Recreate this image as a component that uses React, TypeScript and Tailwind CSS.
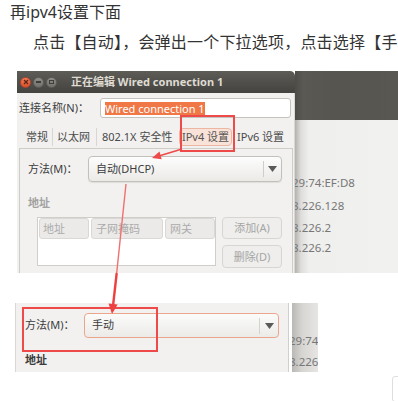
export default function App() {
  return (
    <div className="relative w-[398px] h-[401px] overflow-hidden bg-white font-['Noto_Sans','Noto_Sans_CJK_SC',sans-serif]">
      <div className="pl-[10px] h-[24px] leading-[24px] text-[16px] text-[#333] whitespace-nowrap">再ipv4设置下面</div>
      <div className="mt-[6px] pl-[33px] h-[24px] leading-[24px] text-[16px] text-[#333] whitespace-nowrap tracking-[0.2px]">点击【自动】，会弹出一个下拉选项，点击选择【手</div>

      {/* screenshot 1 */}
      <div className="mt-[17px] ml-[17px] flex h-[202px] overflow-hidden">
        <div className="w-[278px] flex flex-col">
          <div className="h-[22px] rounded-tr-[5px] bg-gradient-to-b from-[#5d5c57] to-[#44433f] flex items-center pl-[3px]">
            <div className="w-[11px] h-[11px] rounded-full bg-gradient-to-b from-[#f27b55] to-[#d9502c] border border-[#b4452a] flex items-center justify-center">
              <svg width="6" height="6" viewBox="0 0 6 6"><path d="M1 1L5 5M5 1L1 5" stroke="#5a2414" strokeWidth="1.2" /></svg>
            </div>
            <div className="ml-[2px] w-[11px] h-[11px] rounded-full bg-gradient-to-b from-[#8f8e89] to-[#72716c] border border-[#5f5e5a] flex items-center justify-center">
              <div className="w-[5px] h-[1.5px] bg-[#3e3d39]" />
            </div>
            <div className="ml-[2px] w-[11px] h-[11px] rounded-full bg-gradient-to-b from-[#8f8e89] to-[#72716c] border border-[#5f5e5a] flex items-center justify-center">
              <div className="w-[5px] h-[4px] border border-[#3e3d39]" />
            </div>
            <div className="ml-[14px] text-[11px] font-bold text-[#dfdbd2] whitespace-nowrap">正在编辑 Wired connection 1</div>
          </div>
          <div className="flex-1 bg-[#f2f1f0] pl-[2px] overflow-hidden border-r border-[#d9d7d3]">
            <div className="mt-[5px] flex items-center h-[20px]">
              <div className="w-[81px] text-[11px] text-[#3c3c3c] whitespace-nowrap">连接名称(N)：</div>
              <div className="w-[191px] h-[20px] bg-white border border-[#c4c2bd] rounded-[3px] flex items-center pl-[4px]">
                <span className="bg-[#f07746] text-white text-[11px] leading-[13px] whitespace-nowrap">Wired connection 1</span>
              </div>
            </div>
            <div className="mt-[8px] h-[22px] flex items-center text-[11px] text-[#4a4a4a] whitespace-nowrap">
              <div className="w-[34px] pl-[7px] h-[18px] leading-[18px] border-r border-[#d8d6d1]">常规</div>
              <div className="w-[44px] pl-[4px] h-[18px] leading-[18px] border-r border-[#d8d6d1]">以太网</div>
              <div className="w-[83px] pl-[5px] h-[18px] leading-[18px]">802.1X 安全性</div>
              <div className="w-[51px] flex justify-center">
                <div className="h-[18px] leading-[16px] px-[2px] rounded-[4px] bg-[#f9e2d8] border border-[#ebb7a2] text-[#555]">IPv4 设置</div>
              </div>
              <div className="pl-[6px] h-[18px] leading-[18px]">IPv6 设置</div>
            </div>
            <div className="w-[274px] h-[140px] border-x border-t border-[#cfcdc8] pl-[8px]">
              <div className="mt-[7px] h-[26px] flex items-center">
                <div className="w-[60px] text-[11px] text-[#3c3c3c] whitespace-nowrap">方法(M)：</div>
                <div className="w-[194px] h-[26px] rounded-[4px] border border-[#c2c0bb] bg-gradient-to-b from-[#fdfdfd] to-[#ebeae7] flex items-center shadow-[0_1px_1px_rgba(0,0,0,0.08)]">
                  <div className="w-[174px] pl-[7px] text-[11px] text-[#3c3c3c]">自动(DHCP)</div>
                  <div className="w-px h-[16px] bg-[#cfcdc8]" />
                  <div className="flex-1 flex justify-center">
                    <svg width="9" height="6" viewBox="0 0 9 6"><path d="M0 0H9L4.5 6Z" fill="#5a5a5a" /></svg>
                  </div>
                </div>
              </div>
              <div className="mt-[13px] h-[16px] leading-[16px] text-[11px] font-bold text-[#a2a2a2]">地址</div>
              <div className="mt-[6px] flex">
                <div className="ml-[9px] w-[179px] h-[49px] bg-white border border-[#cfcecb] flex items-start gap-[2px] text-[11px] text-[#ababab] whitespace-nowrap">
                  <div className="ml-px w-[50px] h-[21px] leading-[19px] pl-[3px] bg-[#eceae8] border border-[#d9d8d4] rounded-[3px]">地址</div>
                  <div className="w-[72px] h-[21px] leading-[19px] pl-[4px] bg-[#eceae8] border border-[#d9d8d4] rounded-[3px]">子网掩码</div>
                  <div className="w-[50px] h-[21px] leading-[19px] pl-[4px] bg-[#eceae8] border border-[#d9d8d4] rounded-[3px]">网关</div>
                </div>
                <div className="ml-[6px] w-[60px] flex flex-col gap-[6px] text-[11px] text-[#a5a5a5]">
                  <div className="h-[22px] leading-[20px] text-center rounded-[4px] border border-[#d6d5d1] bg-[#efeeec]">添加(A)</div>
                  <div className="h-[23px] leading-[21px] text-center rounded-[4px] border border-[#d6d5d1] bg-[#efeeec]">删除(D)</div>
                </div>
              </div>
            </div>
          </div>
        </div>
        <div className="flex-1 flex flex-col">
          <div className="h-[49px] bg-[linear-gradient(to_right,#4d4c48,#5a5954_8px,#565550_40px,#585752)]" />
          <div className="flex-1 bg-[linear-gradient(to_right,#b3b2ae,#dedddb_6px,#efefed_14px,#f1f1ef)] text-[11.5px] text-[#777] whitespace-nowrap overflow-hidden">
            <div className="mt-[55px] h-[16px] leading-[16px] ml-[-3px]">29:74:EF:D8</div>
            <div className="mt-[7px] h-[16px] leading-[16px] ml-[-3px]">8.226.128</div>
            <div className="mt-[6px] h-[16px] leading-[16px] ml-[-3px]">8.226.2</div>
            <div className="mt-[4px] h-[16px] leading-[16px] ml-[-3px]">8.226.2</div>
          </div>
        </div>
      </div>

      {/* screenshot 2 */}
      <div className="mt-[30px] ml-[15px] w-[303px] h-[69px] flex">
        <div className="w-[274px] bg-[#f2f1f0] border-l border-[#d9d8d5] border-r border-r-[#d0cfcb] pl-[9px]">
          <div className="mt-[10px] h-[25px] flex items-center">
            <div className="w-[59px] text-[11px] text-[#3c3c3c] whitespace-nowrap">方法(M)：</div>
            <div className="w-[195px] h-[25px] rounded-[4px] border border-[#eaa68c] bg-gradient-to-b from-[#fbfbfa] to-[#ecebe8] flex items-center">
              <div className="w-[174px] pl-[7px] text-[11px] text-[#3c3c3c]">手动</div>
              <div className="w-px h-[16px] bg-[#d5d3ce]" />
              <div className="flex-1 flex justify-center">
                <svg width="9" height="6" viewBox="0 0 9 6"><path d="M0 0H9L4.5 6Z" fill="#5a5a5a" /></svg>
              </div>
            </div>
          </div>
          <div className="mt-[14px] h-[16px] leading-[16px] text-[11px] font-bold text-[#3c3c3c]">地址</div>
        </div>
        <div className="w-[3px]" />
        <div className="w-[26px] bg-[linear-gradient(to_right,#b9b8b5,#d6d5d2_10px,#e6e5e3)] text-[11.5px] text-[#777] whitespace-nowrap overflow-hidden">
          <div className="mt-[30px] h-[16px] leading-[16px] ml-[-3px]">29:74:EF</div>
          <div className="mt-[5px] h-[16px] leading-[16px] ml-[-3px]">8.226.2</div>
        </div>
      </div>

      {/* overlays */}
      <div className="absolute left-[180px] top-[115px] w-[55px] h-[37px] border-2 border-[#ee4a4a]" />
      <div className="absolute left-[22px] top-[307px] w-[136px] h-[45px] border-2 border-[#ee4a4a]" />
      <div className="absolute left-[392px] top-[376px] w-[14px] h-[26px] border border-[#dedede] rounded-[3px]" />
      <svg className="absolute left-0 top-0 pointer-events-none" width="398" height="401" viewBox="0 0 398 401">
        <line x1="182" y1="149" x2="158" y2="156.3" stroke="#ee4a4a" strokeWidth="1.6" />
        <polygon points="152,158 161.7,159.2 159.5,151.6" fill="#ee4a4a" />
        <line x1="126" y1="184" x2="116.7" y2="273" stroke="#f07070" strokeWidth="1.4" />
        <line x1="116.7" y1="273" x2="113" y2="306" stroke="#ee4040" strokeWidth="2.4" />
        <polygon points="112,314 117.6,304.6 108.6,303.6" fill="#ee4040" />
      </svg>
    </div>
  );
}
